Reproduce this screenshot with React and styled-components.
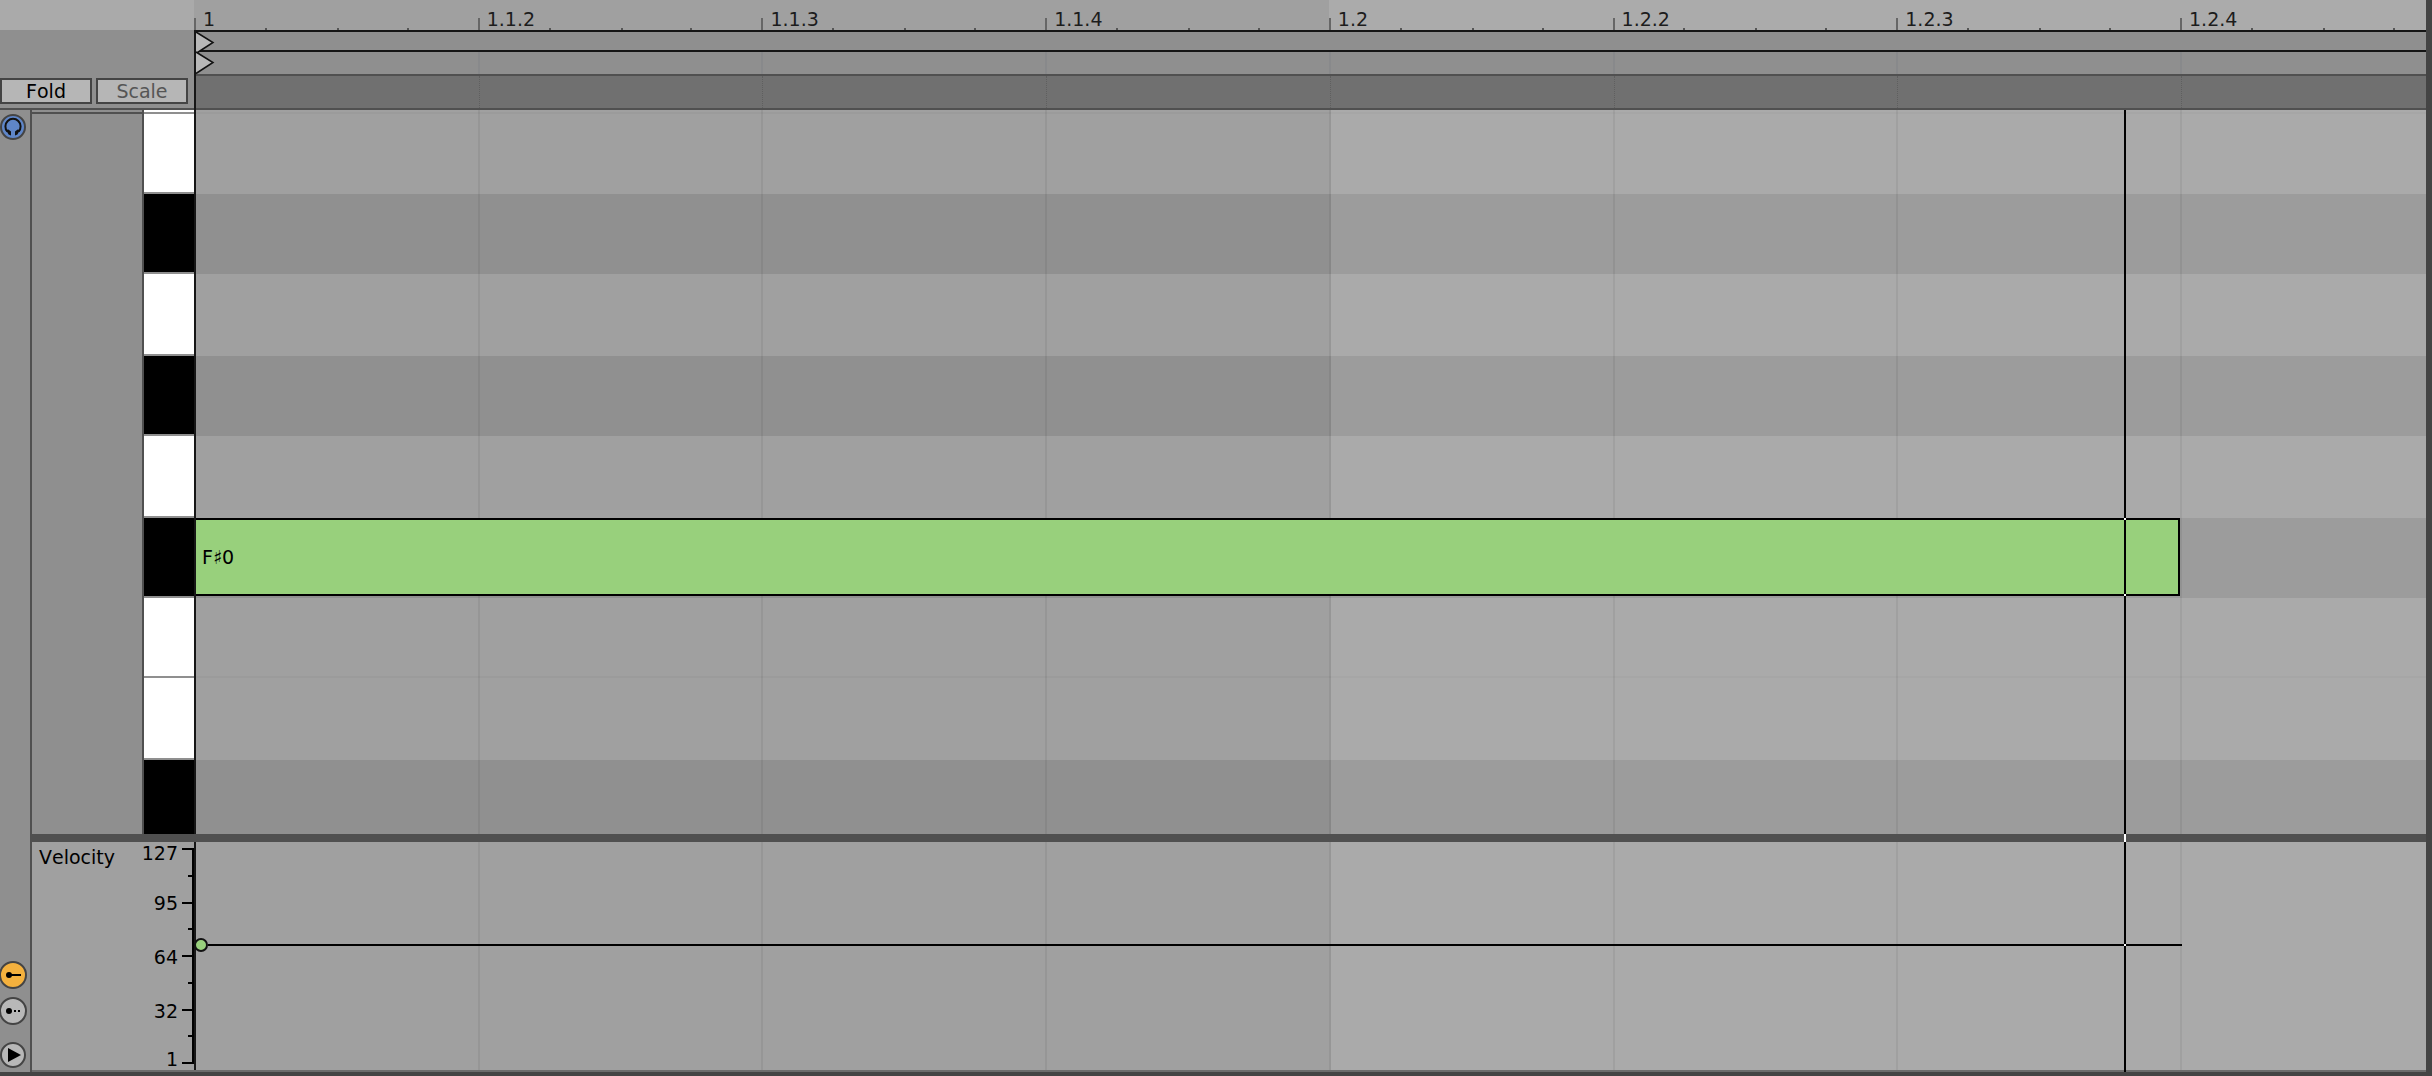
import React, { useState } from "react";
import styled, { createGlobalStyle } from "styled-components";

const VISIBLE_STEPS = 7.86;
const PLAYHEAD_STEP = 6.796;
const playheadLeft = `${(PLAYHEAD_STEP / VISIBLE_STEPS) * 100}%`;

const STEPS = [
  { label: "1", bar: 1 },
  { label: "1.1.2", bar: 1 },
  { label: "1.1.3", bar: 1 },
  { label: "1.1.4", bar: 1 },
  { label: "1.2", bar: 2 },
  { label: "1.2.2", bar: 2 },
  { label: "1.2.3", bar: 2 },
  { label: "1.2.4", bar: 2 },
];

const KEYS = [
  { name: "C1", black: false, height: 4, line: true },
  { name: "B0", black: false, height: 80 },
  { name: "A#0", black: true, height: 80 },
  { name: "A0", black: false, height: 82 },
  { name: "G#0", black: true, height: 80 },
  { name: "G0", black: false, height: 82 },
  { name: "F#0", black: true, height: 80, note: "F♯0" },
  { name: "F0", black: false, height: 80, line: true },
  { name: "E0", black: false, height: 82 },
  { name: "D#0", black: true, height: 74, last: true },
];

const LEVELS = [127, 95, 64, 32, 1];

const GlobalStyle = createGlobalStyle`
  * { box-sizing: border-box; }
  body {
    margin: 0;
    background: #444;
    color: #000;
    font: 19px/20px "DejaVu Sans", sans-serif;
    font-kerning: none;
  }
  button { font: inherit; font-kerning: none; color: inherit; }
`;

const Editor = styled.main`
  padding: 0 6px 4px 0;
`;

const Header = styled.header`
  display: grid;
  grid-template-columns: 194px 1fr;
`;

const Corner = styled.div`
  display: flex;
  flex-direction: column;
  background: #8f8f8f;
  border-top: 30px solid #aaa;
  border-bottom: 2px solid #505050;
`;

const Toolbar = styled.div`
  display: flex;
  gap: 4px;
  margin-top: auto;
  padding: 0 6px 4px 0;
`;

const ToolButton = styled.button`
  flex: 1;
  height: 26px;
  padding: 0;
  border: 2px solid #444;
  background: #b6b6b6;
  color: ${(p) => (p.$dim ? "#555" : "#000")};
`;

const stepColumns = `
  display: grid;
  grid-template-columns: repeat(7, 100fr) 86fr;
`;

const Ruler = styled.div`
  ${stepColumns}
  height: 30px;
  padding-right: 2px;
  background: #ababab;
`;

const RulerStep = styled.div`
  display: grid;
  grid-template-columns: ${(p) => (p.$cut ? "71fr 72fr 70fr 31fr" : "71fr 72fr 70fr 71fr")};
  background: ${(p) => (p.$bar === 1 ? "#a0a0a0" : "#ababab")};
  color: #1c1c1c;
`;

const RulerMark = styled.span`
  align-self: end;
  width: 4px;
  height: 12px;
  border: solid #666;
  border-width: 1px 0 0 2px;
`;

const RulerTick = styled.span`
  align-self: end;
  width: 2px;
  height: 2px;
  background: #555;
`;

const StepHead = styled.div`
  display: flex;
  gap: 4px;
  width: 0;
  white-space: nowrap;
`;

const StepLabel = styled.span`
  padding: 9px 0 0 3px;
`;

const Lanes = styled.div`
  border-left: 2px solid #161616;
`;

const MarkerLane = styled.div`
  display: grid;
  height: ${(p) => p.$height}px;
  background: #8f8f8f;
  border: solid ${(p) => p.$edge};
  border-width: ${(p) => p.$borders};

  & > * { grid-area: 1 / 1; }
`;

const ScrubLane = styled.div`
  display: grid;
  height: 34px;
  background: #707070;
  border-bottom: 2px solid #505050;
`;

const LaneSteps = styled.div`
  ${stepColumns}
`;

const LaneStep = styled.span`
  border-right: ${(p) => (p.$dotted ? "1px dotted #5f5f5f" : "2px solid #88898b")};
  &:last-child { border-right: 0; }
`;

const Body = styled.div`
  display: grid;
  grid-template-columns: 32px 1fr;
`;

const Rail = styled.nav`
  display: flex;
  flex-direction: column;
  align-items: flex-start;
  padding: 4px 0;
  background: #8f8f8f;
  border-right: 2px solid #505050;
`;

const RailGroup = styled.div`
  display: flex;
  flex-direction: column;
  gap: 8px;
  margin: auto 0 17px;
`;

const RoundButton = styled.button`
  display: block;
  padding: 0;
  border: 0;
  background: none;

  svg { display: block; }
`;

const Panels = styled.div`
  border-bottom: 2px solid #6c6c6c;
`;

const Roll = styled.section`
  display: grid;
  grid-template-columns: 112px 50px 1fr;
`;

const FoldPanel = styled.div`
  background: #8f8f8f;
  border-right: 2px solid #505050;
  padding-top: 2px;

  &::before {
    content: "";
    display: block;
    height: 2px;
    background: #505050;
  }
`;

const Keyboard = styled.div`
  display: flex;
  flex-direction: column;
`;

const Key = styled.button`
  display: block;
  height: ${(p) => p.$height}px;
  padding: 0;
  border: solid #8f8f8f;
  border-width: ${(p) => (p.$last ? 0 : "0 0 2px")};
  background: ${(p) => (p.$black ? "#000" : "#fff")};
`;

const Stage = styled.div`
  position: relative;
  display: grid;
  border-left: 2px solid #161616;

  & > * { grid-area: 1 / 1; }
`;

const PitchRows = styled.div`
  display: flex;
  flex-direction: column;
`;

const PitchRow = styled.div`
  display: grid;
  grid-template-columns: 700fr 86fr;
  height: ${(p) => p.$height}px;
  padding-bottom: 2px;
  background: ${(p) => (p.$black ? "#909090" : "#a0a0a0")};
  ${(p) => p.$line && "box-shadow: inset 0 -2px #9b9b9b;"}
`;

const Beats = styled.div`
  ${stepColumns}
`;

const Beat = styled.div`
  background: ${(p) => (p.$bar === 2 ? "rgba(255, 255, 255, 0.11)" : "none")};
  border-right: 2px solid rgba(0, 0, 0, 0.06);
  &:last-child { border-right: 0; }
`;

const Note = styled.button`
  position: relative;
  z-index: 1;
  margin-right: 2px;
  padding: 0 6px;
  border: solid #000;
  border-width: 2px 2px 2px 0;
  background: #98d07c;
  text-align: left;
`;

const Playhead = styled.div`
  position: absolute;
  z-index: 2;
  top: 0;
  bottom: ${(p) => (p.$overhang ? "-2px" : 0)};
  width: 2px;
  background: ${(p) => (p.$light ? "#fff" : "#000")};
`;

const Crossing = styled.span`
  position: absolute;
  z-index: 3;
  top: ${(p) => p.$top}px;
  width: 2px;
  height: 2px;
  background: #fff;
`;

const Splitter = styled.div`
  display: grid;
  grid-template-columns: 164px 1fr;
  height: 8px;
  background: #505050;
`;

const SplitterLane = styled.div`
  grid-column: 2;
  position: relative;
`;

const VelocityPanel = styled.section`
  display: grid;
  grid-template-columns: 162px 1fr;
  height: 228px;
`;

const VelocityScale = styled.div`
  display: flex;
  background: #a0a0a0;
`;

const VelocityTitle = styled.h2`
  flex: 1;
  margin: 0;
  padding: 5px 0 0 7px;
  font: inherit;
`;

const Levels = styled.div`
  display: grid;
  grid-template-rows: 33px 54px 54px 54px 31px;
  align-items: center;
  margin-right: 4px;
  padding: 1px 0;
  text-align: right;

  & > :first-child { align-self: start; }
  & > :last-child { align-self: end; }
`;

const Ticks = styled.div`
  display: flex;
  flex-direction: column;
  justify-content: space-between;
  align-items: flex-end;
  width: 12px;
  margin: 6px 0;
  border-right: 2px solid #000;
`;

const Tick = styled.span`
  width: ${(p) => (p.$minor ? 4 : 10)}px;
  height: 2px;
  background: #000;
`;

const VelocityLane = styled(Stage)`
  background: #a0a0a0;
`;

const StemRow = styled.div`
  display: grid;
  grid-template-columns: 700fr 86fr;
  align-items: start;
  padding-top: 96px;
`;

const Stem = styled.div`
  position: relative;
  z-index: 1;
  display: flex;
  align-items: center;
  margin-left: -2px;

  &::after {
    content: "";
    flex: 1;
    height: 2px;
    background: #000;
  }
`;

const StemHandle = styled.button`
  width: 14px;
  height: 14px;
  padding: 0;
  border: 2px solid #111;
  border-radius: 50%;
  background: #98d07c;
`;

const Flag = styled.svg`
  overflow: visible;
`;

const StartFlag = () => (
  <Flag width="20" height="22" viewBox="0 0 20 22" aria-hidden="true">
    <path d="M0 0 L17 10.5 L0 21.5 Z" fill="#b8b8b8" />
    <path d="M0 0 L17 10.5 L0 21.5" fill="none" stroke="#111" strokeWidth="1.5" />
  </Flag>
);

const HeadphonesIcon = () => (
  <svg width="26" height="26" viewBox="0 0 26 26" aria-hidden="true">
    <circle cx="13" cy="13" r="12" fill="#5f86c8" stroke="#444" strokeWidth="2" />
    <path d="M7.4 17.6 A7.6 7.6 0 1 1 18.6 17.6" fill="none" stroke="#111" strokeWidth="2" />
    <path d="M6 16 L8.4 15.4 L11 17.6 V21.4 L8.6 20.4 Z" fill="#111" />
    <path d="M20 16 L17.6 15.4 L15 17.6 V21.4 L17.4 20.4 Z" fill="#111" />
  </svg>
);

const VelocityIcon = () => (
  <svg width="27" height="28" viewBox="0 0 27 28" aria-hidden="true">
    <circle cx="13" cy="14" r="13" fill="#f4b13e" stroke="#444" strokeWidth="2" />
    <circle cx="9" cy="14" r="3" fill="#000" />
    <path d="M9 14 H21" stroke="#000" strokeWidth="2" />
  </svg>
);

const ChanceIcon = () => (
  <svg width="27" height="28" viewBox="0 0 27 28" aria-hidden="true">
    <circle cx="13" cy="14" r="13" fill="#b8b8b8" stroke="#444" strokeWidth="2" />
    <circle cx="9" cy="14" r="3" fill="#000" />
    <path d="M14 14 H16 M18 14 H20" stroke="#000" strokeWidth="2" />
  </svg>
);

const PlayIcon = () => (
  <svg width="26" height="26" viewBox="0 0 26 26" aria-hidden="true">
    <circle cx="13" cy="13" r="12" fill="#b8b8b8" stroke="#444" strokeWidth="2" />
    <path d="M8 6 L21 13 L8 20 Z" fill="#000" />
  </svg>
);

const BeatLines = () => (
  <Beats>
    {STEPS.map((s) => (
      <Beat key={s.label} $bar={s.bar} />
    ))}
  </Beats>
);

export default function App() {
  const [folded, setFolded] = useState(false);
  const [preview, setPreview] = useState(true);

  return (
    <>
      <GlobalStyle />
      <Editor>
        <Header>
          <Corner>
            <Toolbar>
              <ToolButton aria-pressed={folded} onClick={() => setFolded(!folded)}>
                Fold
              </ToolButton>
              <ToolButton $dim>Scale</ToolButton>
            </Toolbar>
          </Corner>
          <div>
            <Ruler>
              {STEPS.map((s, i) => (
                <RulerStep key={s.label} $bar={s.bar} $cut={i === 7}>
                  <StepHead>
                    <RulerMark />
                    <StepLabel>{s.label}</StepLabel>
                  </StepHead>
                  <RulerTick />
                  <RulerTick />
                  <RulerTick />
                </RulerStep>
              ))}
            </Ruler>
            <Lanes>
              <MarkerLane $height={22} $edge="#161616" $borders="2px 0">
                <StartFlag />
              </MarkerLane>
              <MarkerLane $height={24} $edge="#505050" $borders="0 0 2px">
                <LaneSteps>
                  {STEPS.map((s) => (
                    <LaneStep key={s.label} />
                  ))}
                </LaneSteps>
                <StartFlag />
              </MarkerLane>
              <ScrubLane>
                <LaneSteps>
                  {STEPS.map((s) => (
                    <LaneStep key={s.label} $dotted />
                  ))}
                </LaneSteps>
              </ScrubLane>
            </Lanes>
          </div>
        </Header>

        <Body>
          <Rail>
            <RoundButton aria-label="Preview" aria-pressed={preview} onClick={() => setPreview(!preview)}>
              <HeadphonesIcon />
            </RoundButton>
            <RailGroup>
              <RoundButton aria-label="Velocity lane">
                <VelocityIcon />
              </RoundButton>
              <RoundButton aria-label="Chance lane">
                <ChanceIcon />
              </RoundButton>
            </RailGroup>
            <RoundButton aria-label="Show lanes">
              <PlayIcon />
            </RoundButton>
          </Rail>

          <Panels>
            <Roll>
              <FoldPanel />
              <Keyboard>
                {KEYS.map((k) => (
                  <Key key={k.name} aria-label={k.name} $height={k.height} $black={k.black} $last={k.last} />
                ))}
              </Keyboard>
              <Stage>
                <PitchRows>
                  {KEYS.map((k) => (
                    <PitchRow key={k.name} $height={k.height} $black={k.black} $line={k.line}>
                      {k.note && <Note>{k.note}</Note>}
                    </PitchRow>
                  ))}
                </PitchRows>
                <BeatLines />
                <Playhead style={{ left: playheadLeft }} />
                <Crossing $top={408} style={{ left: playheadLeft }} />
                <Crossing $top={484} style={{ left: playheadLeft }} />
              </Stage>
            </Roll>

            <Splitter role="separator">
              <SplitterLane>
                <Playhead $light style={{ left: playheadLeft }} />
              </SplitterLane>
            </Splitter>

            <VelocityPanel>
              <VelocityScale>
                <VelocityTitle>Velocity</VelocityTitle>
                <Levels>
                  {LEVELS.map((v) => (
                    <span key={v}>{v}</span>
                  ))}
                </Levels>
                <Ticks>
                  {Array.from({ length: 9 }, (_, i) => (
                    <Tick key={i} $minor={i % 2 === 1} />
                  ))}
                </Ticks>
              </VelocityScale>
              <VelocityLane>
                <BeatLines />
                <StemRow>
                  <Stem>
                    <StemHandle aria-label="Note velocity" />
                  </Stem>
                </StemRow>
                <Playhead $overhang style={{ left: playheadLeft }} />
                <Crossing $top={102} style={{ left: playheadLeft }} />
              </VelocityLane>
            </VelocityPanel>
          </Panels>
        </Body>
      </Editor>
    </>
  );
}
